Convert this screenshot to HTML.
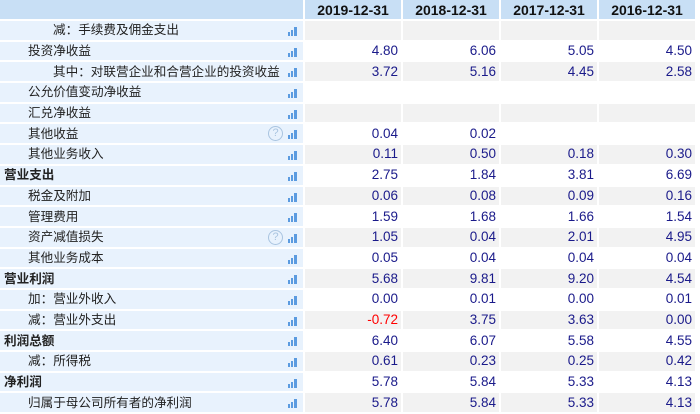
<!DOCTYPE html>
<html><head><meta charset="utf-8"><style>
*{margin:0;padding:0;box-sizing:border-box}
body{width:700px;height:413px;overflow:hidden;background:#fff;font-family:"Liberation Sans","Noto Sans CJK SC",sans-serif;font-size:13px}
table{position:absolute;left:-2px;top:-2px;border-collapse:separate;border-spacing:2px 2px;table-layout:fixed}
td,th{height:18.7px;padding:0;white-space:nowrap;line-height:18px;overflow:hidden}
th{background:#c8dff5;font-weight:bold;font-size:14px;color:#111;text-align:center;height:19px}
th.l{width:303px}
th.d{width:96px}
td.l{background:#e8f2fd;color:#222;position:relative;font-size:12.6px}
td.l.b{font-weight:bold;padding-left:4px}
td.l.i1{padding-left:28px}
td.l.i2{padding-left:53px}
td.n{text-align:right;padding-right:3px;color:#1a1a8a;font-size:13.5px}
tr.g td.n{background:#f2f2f2}
td.n.r{color:#f00}
.bar{position:absolute;right:5px;top:5px;width:10px;height:10px}
.q{position:absolute;right:20px;top:2px;width:15px;height:15px;border:1px solid #a9c4e0;border-radius:50%;color:#a9c4e0;font-size:11px;line-height:13px;text-align:center}
</style></head><body>
<table>
<tr><th class="l"></th><th class="d">2019-12-31</th><th class="d">2018-12-31</th><th class="d">2017-12-31</th><th class="d">2016-12-31</th></tr>
<tr class="g"><td class="l i2">减：手续费及佣金支出<svg class="bar" viewBox="0 0 10 10"><rect x="0" y="6" width="2" height="4" fill="#5b9be0"/><rect x="3" y="4" width="2" height="6" fill="#5b9be0"/><rect x="6" y="1" width="3" height="9" fill="#5b9be0"/></svg></td><td class="n"></td><td class="n"></td><td class="n"></td><td class="n"></td></tr>
<tr><td class="l i1">投资净收益<svg class="bar" viewBox="0 0 10 10"><rect x="0" y="6" width="2" height="4" fill="#5b9be0"/><rect x="3" y="4" width="2" height="6" fill="#5b9be0"/><rect x="6" y="1" width="3" height="9" fill="#5b9be0"/></svg></td><td class="n">4.80</td><td class="n">6.06</td><td class="n">5.05</td><td class="n">4.50</td></tr>
<tr class="g"><td class="l i2">其中：对联营企业和合营企业的投资收益<svg class="bar" viewBox="0 0 10 10"><rect x="0" y="6" width="2" height="4" fill="#5b9be0"/><rect x="3" y="4" width="2" height="6" fill="#5b9be0"/><rect x="6" y="1" width="3" height="9" fill="#5b9be0"/></svg></td><td class="n">3.72</td><td class="n">5.16</td><td class="n">4.45</td><td class="n">2.58</td></tr>
<tr><td class="l i1">公允价值变动净收益<svg class="bar" viewBox="0 0 10 10"><rect x="0" y="6" width="2" height="4" fill="#5b9be0"/><rect x="3" y="4" width="2" height="6" fill="#5b9be0"/><rect x="6" y="1" width="3" height="9" fill="#5b9be0"/></svg></td><td class="n"></td><td class="n"></td><td class="n"></td><td class="n"></td></tr>
<tr class="g"><td class="l i1">汇兑净收益<svg class="bar" viewBox="0 0 10 10"><rect x="0" y="6" width="2" height="4" fill="#5b9be0"/><rect x="3" y="4" width="2" height="6" fill="#5b9be0"/><rect x="6" y="1" width="3" height="9" fill="#5b9be0"/></svg></td><td class="n"></td><td class="n"></td><td class="n"></td><td class="n"></td></tr>
<tr><td class="l i1">其他收益<span class="q">?</span><svg class="bar" viewBox="0 0 10 10"><rect x="0" y="6" width="2" height="4" fill="#5b9be0"/><rect x="3" y="4" width="2" height="6" fill="#5b9be0"/><rect x="6" y="1" width="3" height="9" fill="#5b9be0"/></svg></td><td class="n">0.04</td><td class="n">0.02</td><td class="n"></td><td class="n"></td></tr>
<tr class="g"><td class="l i1">其他业务收入<svg class="bar" viewBox="0 0 10 10"><rect x="0" y="6" width="2" height="4" fill="#5b9be0"/><rect x="3" y="4" width="2" height="6" fill="#5b9be0"/><rect x="6" y="1" width="3" height="9" fill="#5b9be0"/></svg></td><td class="n">0.11</td><td class="n">0.50</td><td class="n">0.18</td><td class="n">0.30</td></tr>
<tr><td class="l b">营业支出<svg class="bar" viewBox="0 0 10 10"><rect x="0" y="6" width="2" height="4" fill="#5b9be0"/><rect x="3" y="4" width="2" height="6" fill="#5b9be0"/><rect x="6" y="1" width="3" height="9" fill="#5b9be0"/></svg></td><td class="n">2.75</td><td class="n">1.84</td><td class="n">3.81</td><td class="n">6.69</td></tr>
<tr class="g"><td class="l i1">税金及附加<svg class="bar" viewBox="0 0 10 10"><rect x="0" y="6" width="2" height="4" fill="#5b9be0"/><rect x="3" y="4" width="2" height="6" fill="#5b9be0"/><rect x="6" y="1" width="3" height="9" fill="#5b9be0"/></svg></td><td class="n">0.06</td><td class="n">0.08</td><td class="n">0.09</td><td class="n">0.16</td></tr>
<tr><td class="l i1">管理费用<svg class="bar" viewBox="0 0 10 10"><rect x="0" y="6" width="2" height="4" fill="#5b9be0"/><rect x="3" y="4" width="2" height="6" fill="#5b9be0"/><rect x="6" y="1" width="3" height="9" fill="#5b9be0"/></svg></td><td class="n">1.59</td><td class="n">1.68</td><td class="n">1.66</td><td class="n">1.54</td></tr>
<tr class="g"><td class="l i1">资产减值损失<span class="q">?</span><svg class="bar" viewBox="0 0 10 10"><rect x="0" y="6" width="2" height="4" fill="#5b9be0"/><rect x="3" y="4" width="2" height="6" fill="#5b9be0"/><rect x="6" y="1" width="3" height="9" fill="#5b9be0"/></svg></td><td class="n">1.05</td><td class="n">0.04</td><td class="n">2.01</td><td class="n">4.95</td></tr>
<tr><td class="l i1">其他业务成本<svg class="bar" viewBox="0 0 10 10"><rect x="0" y="6" width="2" height="4" fill="#5b9be0"/><rect x="3" y="4" width="2" height="6" fill="#5b9be0"/><rect x="6" y="1" width="3" height="9" fill="#5b9be0"/></svg></td><td class="n">0.05</td><td class="n">0.04</td><td class="n">0.04</td><td class="n">0.04</td></tr>
<tr class="g"><td class="l b">营业利润<svg class="bar" viewBox="0 0 10 10"><rect x="0" y="6" width="2" height="4" fill="#5b9be0"/><rect x="3" y="4" width="2" height="6" fill="#5b9be0"/><rect x="6" y="1" width="3" height="9" fill="#5b9be0"/></svg></td><td class="n">5.68</td><td class="n">9.81</td><td class="n">9.20</td><td class="n">4.54</td></tr>
<tr><td class="l i1">加：营业外收入<svg class="bar" viewBox="0 0 10 10"><rect x="0" y="6" width="2" height="4" fill="#5b9be0"/><rect x="3" y="4" width="2" height="6" fill="#5b9be0"/><rect x="6" y="1" width="3" height="9" fill="#5b9be0"/></svg></td><td class="n">0.00</td><td class="n">0.01</td><td class="n">0.00</td><td class="n">0.01</td></tr>
<tr class="g"><td class="l i1">减：营业外支出<svg class="bar" viewBox="0 0 10 10"><rect x="0" y="6" width="2" height="4" fill="#5b9be0"/><rect x="3" y="4" width="2" height="6" fill="#5b9be0"/><rect x="6" y="1" width="3" height="9" fill="#5b9be0"/></svg></td><td class="n r">-0.72</td><td class="n">3.75</td><td class="n">3.63</td><td class="n">0.00</td></tr>
<tr><td class="l b">利润总额<svg class="bar" viewBox="0 0 10 10"><rect x="0" y="6" width="2" height="4" fill="#5b9be0"/><rect x="3" y="4" width="2" height="6" fill="#5b9be0"/><rect x="6" y="1" width="3" height="9" fill="#5b9be0"/></svg></td><td class="n">6.40</td><td class="n">6.07</td><td class="n">5.58</td><td class="n">4.55</td></tr>
<tr class="g"><td class="l i1">减：所得税<svg class="bar" viewBox="0 0 10 10"><rect x="0" y="6" width="2" height="4" fill="#5b9be0"/><rect x="3" y="4" width="2" height="6" fill="#5b9be0"/><rect x="6" y="1" width="3" height="9" fill="#5b9be0"/></svg></td><td class="n">0.61</td><td class="n">0.23</td><td class="n">0.25</td><td class="n">0.42</td></tr>
<tr><td class="l b">净利润<svg class="bar" viewBox="0 0 10 10"><rect x="0" y="6" width="2" height="4" fill="#5b9be0"/><rect x="3" y="4" width="2" height="6" fill="#5b9be0"/><rect x="6" y="1" width="3" height="9" fill="#5b9be0"/></svg></td><td class="n">5.78</td><td class="n">5.84</td><td class="n">5.33</td><td class="n">4.13</td></tr>
<tr class="g"><td class="l i1">归属于母公司所有者的净利润<svg class="bar" viewBox="0 0 10 10"><rect x="0" y="6" width="2" height="4" fill="#5b9be0"/><rect x="3" y="4" width="2" height="6" fill="#5b9be0"/><rect x="6" y="1" width="3" height="9" fill="#5b9be0"/></svg></td><td class="n">5.78</td><td class="n">5.84</td><td class="n">5.33</td><td class="n">4.13</td></tr>
</table>
</body></html>
